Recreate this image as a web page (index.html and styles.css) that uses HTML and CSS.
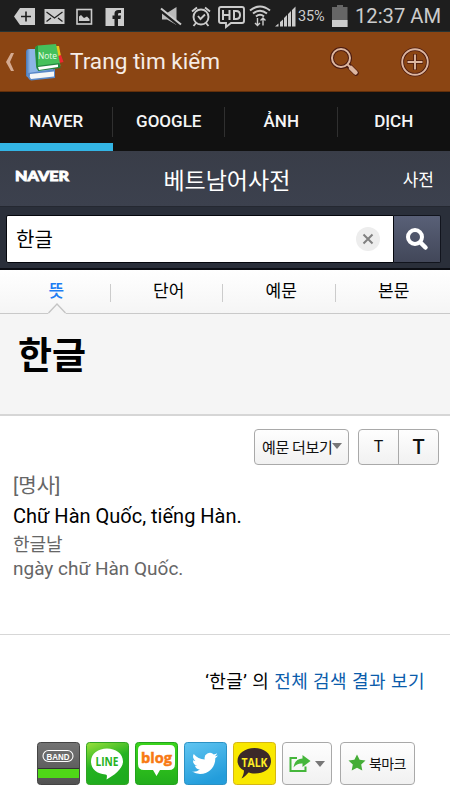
FILE: index.html
```
<!DOCTYPE html>
<html lang="ko">
<head>
  <meta charset="UTF-8">
  <meta name="viewport" content="width=device-width, initial-scale=1.0">
  <title>Trang tìm kiếm</title>
  <link rel="stylesheet" href="styles.css">
</head>
<body>
  <div class="status-bar">
    <svg class="status-left" width="130" height="30" viewBox="0 0 130 30">
      <path d="M14 15.500L20 7H35V24H20Z" fill="#ccc"/>
      <path d="M26 10.500V20.500M21 15.500H31" stroke="#1e1e1e" stroke-width="1.600"/>
      <rect x="44.500" y="8" width="20" height="15" fill="#ccc"/>
      <path d="M46.500 11L54.500 17L62.500 11M46.500 20.500L51 17M62.500 20.500L58 17" fill="none" stroke="#1e1e1e" stroke-width="1.300"/>
      <rect x="77" y="8.500" width="14.500" height="14.500" fill="none" stroke="#ccc" stroke-width="1.600"/>
      <path d="M79 20V15.500L81 14L84 17L87 15.500L89.500 18V20Z" fill="#ccc"/>
      <rect x="105.500" y="7" width="18.500" height="18" fill="#ccc"/>
      <path d="M114.500 25V18H112.500V14.500H114.500V12.500Q114.500 9 118.500 9H121V12H119.500Q118 12 118 13.200V14.500H121L120.500 18H118V25Z" fill="#1e1e1e"/>
    </svg>
    <svg class="status-right" width="142" height="30" viewBox="155 0 142 30">
      <path d="M162 12H167L176.500 6V24L167 18.500H162Z" fill="#bbb"/>
      <path d="M160 9L181 25.500" stroke="#1e1e1e" stroke-width="3"/>
      <path d="M161 7.500L181 23.500" stroke="#ccc" stroke-width="2"/>
      <g fill="none" stroke="#ccc" stroke-width="1.900">
        <circle cx="201" cy="16" r="7.500"/>
        <path d="M198 15L200.500 18L205 13.500M192 10.500L197 6.500M205 6.500L210 10.500M196 22L193.500 25M206 22L208.500 25"/>
        <path d="M221 6H242Q244 6 244 8V20Q244 22 242 22H231L226 26V22H221Q219 22 219 20V8Q219 6 221 6Z"/>
        <path d="M223 9V19M229.500 9V19M223 14H229.500M234 10V18H236Q240 18 240 14Q240 10 236 10Z" stroke-width="2"/>
        <path d="M250 9.500Q260 1.500 270 9.500M253 12.500Q260 7 267 12.500M256 15.500Q260 12 264 15.500" stroke-width="2"/>
        <path d="M257.500 24.500V17M255 22L257.500 24.500L260 22M263 17V24.500M260.500 19.500L263 17L265.500 19.500" stroke-width="1.400"/>
      </g>
      <path d="M275 25.500L278.500 22.500V25.500ZM280 25.500V21L283 18.500V25.500ZM284 25.500V17L287 14V25.500ZM288 25.500V13L291 10V25.500ZM292 25.500V9L295.500 5.500V25.500Z" fill="#ccc"/>
    </svg>
    <span class="battery-text">35%</span>
    <svg class="battery" width="16" height="24" viewBox="0 0 16 24">
      <path d="M0 3H5V1H11V3H15.500V23H0Z" fill="#666"/>
      <path d="M0 16H15.500V23H0Z" fill="#ccc"/>
    </svg>
    <span class="clock">12:37 AM</span>
  </div>

  <div class="action-bar">
    <svg class="back" width="10" height="20" viewBox="0 0 10 20">
      <path d="M6 1H9L5 10L9 19H6L1 10Z" fill="#d5aa90"/>
    </svg>
    <svg class="app-icon" width="40" height="40" viewBox="0 0 40 40">
      <defs>
        <linearGradient id="blueBook"><stop offset="0" stop-color="#4777b5"/><stop offset="0.150" stop-color="#8db5e7"/><stop offset="1" stop-color="#8db5e7"/></linearGradient>
      </defs>
      <path d="M1 10Q1 7 4 7H28V34L5 37L1 34Z" fill="url(#blueBook)"/>
      <path d="M3 31L30 27V36L6 38.500Q2 37 3 31Z" fill="#5b89c8"/>
      <path d="M5 32L29 29.500V34.500L6 37Q4 35 5 32Z" fill="#f7f7f7"/>
      <path d="M31 4L34 4L36.500 17L32 19Z" fill="#e8c51b"/>
      <path d="M33 14L36 13L38.500 20L34 21Z" fill="#ed2730"/>
      <path d="M10 7Q10 4 13 3.500L31 2L35.500 24L14 28L12 25Z" fill="#45c15b"/>
      <path d="M10 7Q10 4 13 3.500V28Q11 27 11 23Z" fill="#24913e"/>
      <path d="M12 24L34.500 21L35.500 26L13 29Z" fill="#238540"/>
      <path d="M13 25L33 22.500V25L14 28Z" fill="#fff"/>
      <text class="note-text" x="13" y="16.500" textLength="19" lengthAdjust="spacingAndGlyphs">Note</text>
    </svg>
    <h1>Trang tìm kiếm</h1>
    <svg class="action-search" width="30" height="32" viewBox="0 0 30 32">
      <g fill="none" stroke="#4b1b10" stroke-linecap="round">
        <circle cx="11" cy="12" r="9" stroke-width="4"/>
        <path d="M18 19L26 27" stroke-width="5.500"/>
      </g>
      <g fill="none" stroke="#ddb6a0" stroke-linecap="round">
        <circle cx="11" cy="12" r="9" stroke-width="2"/>
        <path d="M17.500 18.500L20 21" stroke-width="2"/>
        <path d="M21 22L25.500 26.500" stroke-width="4.500"/>
      </g>
    </svg>
    <svg class="action-add" width="30" height="30" viewBox="0 0 30 30">
      <g fill="none" stroke="#4b1b10" stroke-width="3.600">
        <circle cx="15" cy="15" r="12.800"/>
        <path d="M15 7V23M7 15H23"/>
      </g>
      <g fill="none" stroke="#ddb6a0" stroke-width="1.900">
        <circle cx="15" cy="15" r="12.800"/>
        <path d="M15 7.500V22.500M7.500 15H22.500"/>
      </g>
    </svg>
  </div>

  <div class="tabs">
    <div class="tab active">NAVER</div>
    <div class="tab">GOOGLE</div>
    <div class="tab">ẢNH</div>
    <div class="tab">DỊCH</div>
  </div>

  <div class="naver-header">
    <svg class="naver-logo" width="56" height="16" viewBox="0 0 56 16">
      <text x="0" y="13" textLength="54" lengthAdjust="spacingAndGlyphs">NAVER</text>
    </svg>
    <span class="naver-title">베트남어사전</span>
    <span class="naver-menu">사전</span>
  </div>

  <div class="search-area">
    <div class="search-input">
      <span>한글</span>
      <svg width="24" height="24" viewBox="0 0 24 24">
        <circle cx="12" cy="12" r="12" fill="#ededed"/>
        <path d="M7.500 7.500L16.500 16.500M16.500 7.500L7.500 16.500" stroke="#808080" stroke-width="2"/>
      </svg>
    </div>
    <div class="search-button">
      <svg width="24" height="24" viewBox="0 0 24 24" fill="none" stroke="#fff">
        <circle cx="10" cy="10" r="7" stroke-width="4"/>
        <path d="M15.500 15.500L20.500 20.500" stroke-width="4.500" stroke-linecap="round"/>
      </svg>
    </div>
  </div>

  <div class="sub-tabs">
    <div class="sub-tab selected">뜻
      <svg class="pointer" width="18" height="11" viewBox="0 0 18 11">
        <path d="M0 11L0.500 10L9 1L17.500 10L18 11Z" fill="#f5f5f5"/>
        <path d="M0.500 10L9 1L17.500 10" fill="none" stroke="#c4c4c4" stroke-width="1.300"/>
      </svg>
    </div>
    <div class="sub-tab">단어</div>
    <div class="sub-tab">예문</div>
    <div class="sub-tab">본문</div>
  </div>

  <div class="word"><h2>한글</h2></div>

  <div class="entry">
    <div class="tools">
      <div class="box more">예문 더보기<i class="arrow"></i></div>
      <div class="box sizes"><span class="small-t">T</span><span class="big-t">T</span></div>
    </div>
    <p class="pos">[명사]</p>
    <p class="meaning">Chữ Hàn Quốc, tiếng Hàn.</p>
    <p class="example">한글날</p>
    <p class="example-vi">ngày chữ Hàn Quốc.</p>
  </div>

  <div class="all-results">‘한글’ 의 <a>전체 검색 결과 보기</a></div>

  <div class="share">
    <svg width="43" height="43" viewBox="0 0 43 43">
      <defs>
        <linearGradient id="band" x2="0" y2="1"><stop offset="0" stop-color="#747474"/><stop offset="1" stop-color="#515151"/></linearGradient>
      </defs>
      <rect x="0.500" y="0.500" width="42" height="42" rx="3" fill="url(#band)" stroke="#444"/>
      <rect x="1" y="27" width="41" height="9" fill="#4fd817"/>
      <path d="M1 26.500H42" stroke="#333"/>
      <rect x="6" y="8.500" width="30" height="11" rx="5.500" fill="none" stroke="#fff" stroke-width="1.100"/>
      <text class="band-text" x="21" y="17.500" textLength="23" lengthAdjust="spacingAndGlyphs">BAND</text>
    </svg>
    <svg width="43" height="43" viewBox="0 0 43 43">
      <defs>
        <linearGradient id="line" x2="0.400" y2="1"><stop offset="0" stop-color="#9be13c"/><stop offset="0.550" stop-color="#25b321"/><stop offset="1" stop-color="#1eab1e"/></linearGradient>
      </defs>
      <rect x="0.500" y="0.500" width="42" height="42" rx="3" fill="url(#line)" stroke="#30a322"/>
      <path d="M21 6.500C29.500 6.500 37 11.500 37 19.500C37 27 27 34 20.500 37.500C21 35 21.500 32.500 19.500 32.500C11 32 5 27 5 19.500C5 11.500 12.500 6.500 21 6.500Z" fill="#fff"/>
      <text class="line-text" x="21" y="23.500" textLength="23" lengthAdjust="spacingAndGlyphs">LINE</text>
    </svg>
    <svg width="43" height="43" viewBox="0 0 43 43">
      <defs>
        <linearGradient id="blog" x2="0" y2="1"><stop offset="0" stop-color="#3cd51c"/><stop offset="1" stop-color="#22ad1c"/></linearGradient>
      </defs>
      <rect x="0.500" y="0.500" width="42" height="42" rx="3" fill="url(#blog)" stroke="#22a31c"/>
      <path d="M8 3H35Q40 3 40 8V22Q40 28 34 28H25L21.500 34L18 28H9Q3 28 3 22V8Q3 3 8 3Z" fill="#fff"/>
      <text class="blog-text" x="21.500" y="20.500" textLength="31" lengthAdjust="spacingAndGlyphs">blog</text>
    </svg>
    <svg width="43" height="43" viewBox="0 0 43 43">
      <defs>
        <linearGradient id="twitter" x2="0.400" y2="1"><stop offset="0" stop-color="#61c5f1"/><stop offset="1" stop-color="#239ddb"/></linearGradient>
      </defs>
      <rect x="0.500" y="0.500" width="42" height="42" rx="3" fill="url(#twitter)" stroke="#2b91c4"/>
      <path transform="translate(8 8.500) scale(1.080)" d="M23.950 4.570a10 10 0 0 1-2.830.78 4.960 4.960 0 0 0 2.160-2.720c-.95.560-2 .96-3.120 1.180a4.920 4.920 0 0 0-8.390 4.480C7.690 8.100 4.070 6.130 1.640 3.160a4.920 4.920 0 0 0 1.520 6.570 4.900 4.900 0 0 1-2.230-.61v.06a4.920 4.920 0 0 0 3.950 4.830 5 5 0 0 1-2.210.08 4.940 4.940 0 0 0 4.600 3.420A9.870 9.870 0 0 1 0 19.540a14 14 0 0 0 7.550 2.210c9.050 0 14-7.500 14-13.980 0-.21 0-.42-.02-.63a9.940 9.940 0 0 0 2.460-2.550z" fill="#fff"/>
    </svg>
    <svg width="43" height="43" viewBox="0 0 43 43">
      <rect x="0.500" y="0.500" width="42" height="42" rx="3" fill="#f9e800" stroke="#d5b613"/>
      <path d="M21.500 6C31 6 38 11.500 38 19C38 27 31 31.500 22 31.500C19 31.500 17 31 15.500 30.500C13.500 33 11 35.500 8.500 36.500C10 34 11 31 11 28.500C7 26.500 4.500 23 4.500 19C4.500 11.500 12 6 21.500 6Z" fill="#3b2929"/>
      <text class="talk-text" x="21.500" y="24.500" textLength="26" lengthAdjust="spacingAndGlyphs">TALK</text>
    </svg>
    <div class="box share-button">
      <svg width="22" height="18" viewBox="0 0 22 18">
        <path d="M8 3H1.500V16H16.500V11.500" fill="none" stroke="#45b63b" stroke-width="2"/>
        <path d="M13.500 0L21.500 6L13.500 12V8.500Q8 8 4.500 12.500Q5.500 4 13.500 3.500Z" fill="#45b63b"/>
      </svg>
      <i class="arrow"></i>
    </div>
    <div class="box bookmark">
      <svg width="18" height="17" viewBox="0 0 18 17">
        <path d="M9 0.500L11.600 5.800L17.500 6.500L13.200 10.600L14.300 16.500L9 13.700L3.700 16.500L4.800 10.600L0.500 6.500L6.400 5.800Z" fill="#45ad36"/>
      </svg>
      <span>북마크</span>
    </div>
  </div>
</body>
</html>
```
FILE: styles.css
```
* {
  box-sizing: border-box;
}

body {
  margin: 0;
  width: 450px;
  height: 800px;
  overflow: hidden;
  background: #fff;
  font-family: Roboto, "Noto Sans CJK KR", sans-serif;
  color: #000;
}

svg {
  display: block;
  flex-shrink: 0;
}

h1,
h2,
p {
  margin: 0;
  font-weight: normal;
}

/* Status bar */
.status-bar {
  display: flex;
  align-items: center;
  height: 31px;
  background: #1e1e1e;
  color: #ccc;
  white-space: nowrap;
}

.status-right {
  margin-left: 25px;
}

.battery-text {
  width: 27px;
  margin: 2px 0 0 1px;
  font-size: 14.5px;
  letter-spacing: -0.2px;
}

.battery {
  margin-left: 7px;
}

.clock {
  margin-left: 7px;
  font-size: 20.2px;
}

/* Title bar */
.action-bar {
  display: flex;
  align-items: center;
  height: 61px;
  padding-left: 5px;
  background: #8b4513;
  border-top: 1px solid #253334;
  border-bottom: 1px solid #632f0a;
}

.app-icon {
  margin-left: 10px;
}

.note-text {
  font: 8.5px "Open Sans", sans-serif;
  fill: #eaffea;
}

h1 {
  width: 160px;
  margin-left: 5px;
  font-size: 22.6px;
  white-space: nowrap;
  color: #f6ece6;
}

.action-search {
  margin-left: 100px;
}

.action-add {
  margin-left: 40px;
}

.tabs {
  display: flex;
  height: 59px;
  background: #111;
}

.tab {
  flex: 1;
  padding-top: 18px;
  border-bottom: 0 solid #33b5e5;
  font-size: 17px;
  font-weight: 500;
  line-height: 22px;
  text-align: center;
  color: #f5f5f5;
  background: linear-gradient(#303030, #303030) no-repeat 100% 15px / 1px 30px;
}

.tab:last-child {
  background: none;
}

.tab.active {
  border-bottom-width: 8px;
}

/* Dictionary header */
.naver-header {
  display: flex;
  align-items: center;
  justify-content: space-between;
  height: 56px;
  padding: 0 16px 0 15px;
  background: linear-gradient(#393d48, #3c414e);
  border-bottom: 1px solid #242831;
  color: #fff;
}

.naver-logo {
  margin-top: -5px;
  font: 900 13.5px Lato, sans-serif;
  fill: #fff;
  stroke: #fff;
  stroke-width: 0.8px;
}

.naver-title {
  margin-left: -20px;
  font-size: 23px;
}

.naver-menu {
  font-size: 17px;
}

.search-area {
  display: flex;
  height: 63px;
  padding: 8px 9px 7px 6px;
  background: #2a2f3a;
  border-bottom: 2px solid #0c0e14;
}

.search-input {
  display: flex;
  align-items: center;
  justify-content: space-between;
  width: 388px;
  height: 48px;
  padding: 0 13px 0 9px;
  background: #fff;
  border: 1px solid #05070d;
  border-radius: 2px 0 0 2px;
  font-size: 20px;
}

.search-input span {
  padding-bottom: 2px;
}

.search-button {
  display: flex;
  align-items: center;
  justify-content: center;
  width: 47px;
  height: 48px;
  background: linear-gradient(#596077, #424759);
  border: 1px solid #11141d;
  border-left: 0;
  border-radius: 0 2px 2px 0;
}

.sub-tabs {
  display: flex;
  height: 44px;
  background: linear-gradient(#fff, #f5f5f5);
  border-bottom: 1px solid #c9c9c9;
}

.sub-tab {
  position: relative;
  flex: 1;
  font-size: 17px;
  line-height: 43px;
  text-align: center;
  background: linear-gradient(#ccc, #ccc) no-repeat 98.5% 14px / 1px 18px;
}

.sub-tab:last-child {
  background: none;
}

.selected {
  color: #1c7cf3;
  font-weight: 500;
}

/* Overlaps the bottom border of the tabs */
.pointer {
  position: absolute;
  left: 48px;
  bottom: -1px;
}

.word {
  height: 102px;
  padding: 14px 17px 0 18px;
  background: #f5f5f5;
  border-bottom: 2px solid #d6d6d6;
}

h2 {
  font-size: 37px;
  font-weight: bold;
  line-height: 58px;
}

/* Definition */
.entry {
  height: 219px;
  padding: 13px 11px 0 13px;
  border-bottom: 1px solid #d7d7d7;
  color: #666;
}

.tools {
  display: flex;
  justify-content: flex-end;
  gap: 9px;
  margin-bottom: 7px;
}

.box {
  display: flex;
  align-items: center;
  border: 1px solid #a9a9a9;
  border-radius: 4px;
  background: linear-gradient(#fefefe, #f1f1f1);
  color: #111;
  white-space: nowrap;
}

.more {
  width: 95px;
  height: 36px;
  padding: 0 0 2px 7px;
  font-size: 15px;
  letter-spacing: -0.4px;
}

.arrow {
  border: 5px solid transparent;
  border-top: 6px solid #777;
  border-bottom: 0;
}

.sizes {
  width: 81px;
  height: 36px;
}

.sizes span {
  flex: 1;
  line-height: 34px;
  text-align: center;
}

.small-t {
  border-right: 1px solid #a9a9a9;
  font-size: 16px;
}

.big-t {
  font-size: 20px;
  font-weight: 500;
}

.pos {
  font-size: 20px;
  line-height: 28px;
}

.meaning {
  font-size: 20px;
  line-height: 32px;
  color: #000;
}

.example {
  font-size: 18px;
  line-height: 26px;
}

.example-vi {
  font-size: 19px;
  line-height: 21px;
}

.all-results {
  height: 107px;
  padding: 33px 25px 0 0;
  font-size: 18px;
  line-height: 28px;
  letter-spacing: 0.45px;
  text-align: right;
}

.all-results a {
  color: #0b5cab;
}

/* Share buttons */
.share {
  display: flex;
  gap: 6px;
  padding-left: 37px;
}

.share text {
  text-anchor: middle;
  fill: #fff;
}

.band-text {
  font: bold 8.5px "Liberation Sans", sans-serif;
}

.share .line-text {
  font: bold 11.5px "Open Sans", sans-serif;
  fill: #25b221;
}

.share .blog-text {
  font: bold 15px "Open Sans", sans-serif;
  fill: #f87913;
  stroke: #f87913;
  stroke-width: 0.5px;
}

.share .talk-text {
  font: bold 12.5px "Open Sans", sans-serif;
  fill: #ffed24;
}

.share-button {
  gap: 4px;
  width: 50px;
  height: 43px;
  padding-left: 6px;
}

.bookmark {
  gap: 3px;
  width: 75px;
  height: 43px;
  margin-left: 2px;
  padding: 0 0 2px 7px;
  font-size: 14px;
  letter-spacing: -0.6px;
}
```
